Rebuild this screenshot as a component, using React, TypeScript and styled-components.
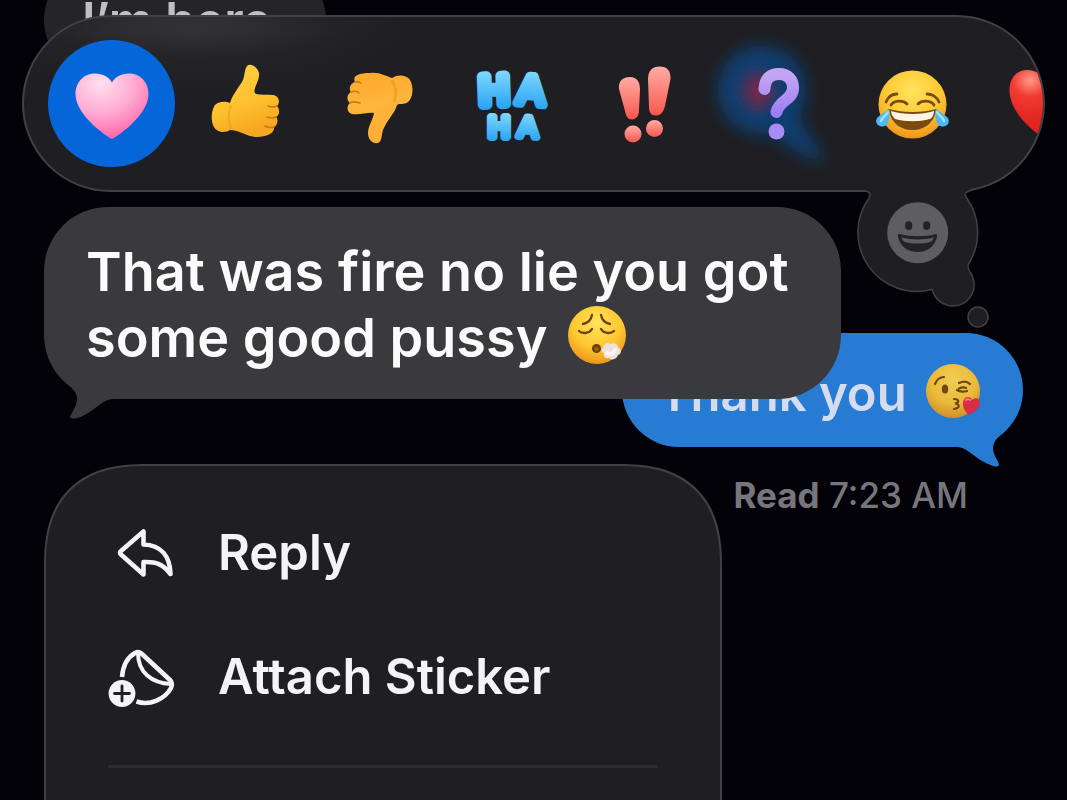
import React from "react";
import styled, { createGlobalStyle } from "styled-components";

const GlobalStyle = createGlobalStyle`
  * { box-sizing: border-box; }
  body {
    margin: 0;
    background: #030208;
    color: #fbfbfd;
    font-family: Inter, "Liberation Sans", sans-serif;
    font-weight: 600;
  }
  button { font: inherit; color: inherit; border: 0; padding: 0; background: none; cursor: pointer; }
  svg { display: block; overflow: visible; }
`;

const Screen = styled.main`
  display: grid;
  grid-template: minmax(0, 1fr) / minmax(0, 1fr);
  height: 100vh;
  overflow: hidden;
`;

const Conversation = styled.section`
  grid-area: 1 / 1;
  display: flex;
  flex-direction: column;
  gap: 256px;
  margin-top: -37px;
  padding: 0 44px;
`;

const Sent = styled.div`
  display: flex;
  flex-direction: column;
  align-items: flex-end;
  gap: 28px;
`;

type Tone = "faded" | "sent" | "focus";

const tones: Record<Tone, { text: string; fill: string; padding: string; size: number; radius: number }> = {
  faded: { text: "#bfbfc4", fill: "#252529", padding: "25px 54px 23px 38px", size: 49, radius: 57 },
  sent: { text: "#d5dcf0", fill: "#277bd3", padding: "28px 42px 20px 36px", size: 49, radius: 57 },
  focus: { text: "#fbfbfd", fill: "#3a393d", padding: "32px 42px 28px", size: 54, radius: 64 },
};

const Bubble = styled.div<{ $tone: Tone }>`
  position: relative;
  width: fit-content;
  max-width: 797px;
  padding: ${(p) => tones[p.$tone].padding};
  border-radius: ${(p) => tones[p.$tone].radius}px;
  font-size: ${(p) => tones[p.$tone].size}px;
  line-height: 66px;
  color: ${(p) => tones[p.$tone].text};
  background: ${(p) => tones[p.$tone].fill};
`;

const TailSvg = styled.svg<{ $side: "left" | "right" }>`
  position: absolute;
  bottom: -22px;
  ${(p) => p.$side}: 16px;
`;

const InlineEmoji = styled.span<{ $size: number }>`
  display: inline-block;
  vertical-align: middle;
  margin: -14px 0 0 6px;
  width: ${(p) => p.$size}px;
  height: ${(p) => p.$size}px;
`;

const Receipt = styled.p`
  margin: 0;
  padding-right: 55px;
  font-size: 35px;
  font-weight: 500;
  line-height: 40px;
  color: #77767d;
  b { font-weight: 700; }
`;

const Overlay = styled.section`
  grid-area: 1 / 1;
  display: flex;
  flex-direction: column;
  min-width: 0;
  padding-top: 15px;
  z-index: 1;
`;

const ReactionWrap = styled.div`
  position: relative;
  margin: 0 22px 15px;
`;

const ReactionBar = styled.div`
  display: flex;
  align-items: center;
  gap: 6px;
  height: 177px;
  padding-left: 24px;
  border: 2px solid #414145;
  border-radius: 89px;
  background:
    radial-gradient(ellipse 150px 28px at 170px 12px, rgba(90, 90, 98, 0.22), transparent),
    radial-gradient(ellipse 240px 80px at 160px 0, rgba(70, 70, 76, 0.25), transparent),
    #1f1f23;
  overflow: hidden;
`;

const Reaction = styled.button<{ $selected?: boolean }>`
  display: grid;
  place-items: center;
  flex: 0 0 127px;
  height: 127px;
  border-radius: 50%;
  background: ${(p) => (p.$selected ? "#0566d9" : "transparent")};
`;

const ThoughtButton = styled.button`
  position: absolute;
  top: 170px;
  right: 45px;
  width: 150px;
  height: 150px;
  z-index: 1;
`;

const FocusArea = styled.div`
  padding: 0 44px;
  margin-bottom: 65px;
`;

const Menu = styled.nav`
  flex: 1 0 auto;
  width: min(678px, calc(100% - 88px));
  margin-left: 44px;
  padding: 25px 62px 0;
  border: 2px solid #414145;
  border-bottom: 0;
  border-radius: 90px 90px 0 0;
  background: #1f1e22;

  @supports (corner-shape: superellipse(1.3)) {
    border-radius: 102px 102px 0 0;
    corner-shape: superellipse(1.3);
  }
`;

const MenuItem = styled.button`
  display: flex;
  align-items: center;
  gap: 36px;
  width: 100%;
  height: 124px;
  font-size: 49px;
  line-height: 60px;
  color: #f4f4f7;
  text-align: left;
`;

const Divider = styled.hr`
  margin: 26px 0 0;
  border: 0;
  height: 3px;
  border-radius: 2px;
  background: #2d2c31;
`;

const HEART =
  "M44 79C41 78 7.500 56 7.500 34C7.500 22 16 13.500 27 13.500C35 13.500 41 17 44 22.500C47 17 53 13.500 61 13.500C72 13.500 80.500 22 80.500 34C80.500 56 47 78 44 79Z";

const Icon = ({ children }: { children: React.ReactNode }) => (
  <svg width="88" height="88" viewBox="0 0 88 88" aria-hidden="true">{children}</svg>
);

const Heart = ({ id, colors }: { id: string; colors: string[] }) => (
  <Icon>
    <defs>
      <radialGradient id={id} cx="0.35" cy="0.15" r="0.9">
        <stop offset="0" stopColor={colors[0]} />
        <stop offset="0.5" stopColor={colors[1]} />
        <stop offset="1" stopColor={colors[2]} />
      </radialGradient>
    </defs>
    <path d={HEART} fill={`url(#${id})`} />
  </Icon>
);

const RedHeart = () => (
  <Icon>
    <defs>
      <radialGradient id="red" cx="0.28" cy="0.15" r="0.6">
        <stop offset="0" stopColor="#ff9a88" />
        <stop offset="0.4" stopColor="#f13a32" />
        <stop offset="1" stopColor="#e02420" />
      </radialGradient>
    </defs>
    <path d="M47 79C42 77 10.500 56 10.500 30C10.500 18 18 10 28 10C36 10 43 14 47 21C51 14 58 10 66 10C76 10 84 18 84 30C84 56 52 77 47 79Z" fill="url(#red)" />
  </Icon>
);

const ThumbUp = () => (
  <Icon>
    <defs>
      <linearGradient id="up" x1="0" y1="0" x2="0.3" y2="1">
        <stop offset="0" stopColor="#ffd344" />
        <stop offset="0.65" stopColor="#fdc02c" />
        <stop offset="1" stopColor="#f6a722" />
      </linearGradient>
    </defs>
    <path
      fill="url(#up)"
      d="M29 43C31 36 37 28 41 22C44 17 43 10 46 6C49 3 56 6 58 13C59 20 53 27 53.500 32C54 36 64 34 72 35C79 36 79 44 76 46C79 49 79 55 75 57C78 60 76 66 73 67C74 73 66 77 56 77C46 77 38 70 29 70C25 73 16 73 13 67C9 60 11 49 14 45C18 41 25 41 29 43Z"
    />
    <path d="M30 45C27 53 27 62 30 69" fill="none" stroke="#e69a19" strokeWidth="2" opacity="0.55" />
    <path d="M76 46C72 48 70 47 67 46M75 57C71 59 69 58 66 57M73 67C69 68 67 68 64 66" fill="none" stroke="#c97a10" strokeWidth="1.600" strokeLinecap="round" />
  </Icon>
);

const ThumbDown = () => (
  <Icon>
    <defs>
      <linearGradient id="down" x1="0" y1="0" x2="0.2" y2="1">
        <stop offset="0" stopColor="#ffa929" />
        <stop offset="0.5" stopColor="#ffb43c" />
        <stop offset="1" stopColor="#ffae35" />
      </linearGradient>
    </defs>
    <path
      fill="url(#down)"
      d="M58 18C64 14 73 15 76 20C80 27 79 38 74 42C70 45 65 43 63 45C61 53 53 60 49 70C47 77 48 81 44 83C39 84 34 80 34 73C34 66 39 60 40 53C34 52 27 55 18 54C13 53 12 46 16 43C12 40 13 34 17 32C14 28 17 23 21 22C18 15 26 13 36 13C46 12 51 16 58 18Z"
    />
    <path d="M58 20C62 27 63 35 60 42" fill="none" stroke="#ed8f19" strokeWidth="2.500" opacity="0.6" />
    <path d="M21 22C23 21 25 22 27 23M17 32C20 31 23 31 25 33M16 43C19 41 23 42 26 43" fill="none" stroke="#cf7912" strokeWidth="1.600" strokeLinecap="round" />
  </Icon>
);

const HaHa = () => (
  <Icon>
    <defs>
      <linearGradient id="ha" x1="0" y1="0" x2="0" y2="1">
        <stop offset="0" stopColor="#85dcff" />
        <stop offset="1" stopColor="#229ff2" />
      </linearGradient>
    </defs>
    <g fontFamily="Liberation Sans, sans-serif" fontWeight="400" fill="url(#ha)" stroke="url(#ha)" strokeLinejoin="round" strokeLinecap="round" textAnchor="middle">
      <text x="27" y="44" fontSize="40" strokeWidth="11" transform="rotate(-2 26 30)">H</text>
      <text x="64" y="44" fontSize="40" strokeWidth="9" transform="rotate(4 63 30)">A</text>
      <text x="32" y="77" fontSize="29" strokeWidth="8">H</text>
      <text x="61" y="77" fontSize="29" strokeWidth="7" transform="rotate(3 61 66)">A</text>
    </g>
  </Icon>
);

const Bangs = () => (
  <Icon>
    <defs>
      <linearGradient id="bang" x1="0" y1="0" x2="0" y2="1">
        <stop offset="0" stopColor="#ffaca3" />
        <stop offset="1" stopColor="#f9574d" />
      </linearGradient>
    </defs>
    <g fill="url(#bang)">
      <path d="M19 29C18 21 23 17 30 17C37 17 40 22 40 29L39 50C39 56 36 59.500 32 59.500C28 59.500 26 56 25 51Z" />
      <path d="M48 19C48 11 52 6.500 60 6.500C67 6.500 71 11 70.500 19L65 46C63 53 60 55.500 56 55.500C51 55.500 49 52 49 47Z" />
      <circle cx="33" cy="74" r="8.500" />
      <circle cx="54.500" cy="68.500" r="8.500" />
    </g>
  </Icon>
);

const Question = () => (
  <Icon>
    <defs>
      <filter id="glow" x="-60%" y="-60%" width="220%" height="220%">
        <feGaussianBlur stdDeviation="8" />
      </filter>
      <linearGradient id="q" x1="0" y1="0" x2="0" y2="1">
        <stop offset="0" stopColor="#c7a5f6" />
        <stop offset="1" stopColor="#9c80f3" />
      </linearGradient>
    </defs>
    <path d="M30 -14A44 44 0 1 0 38 73C52 84 70 98 88 102C92 96 82 82 74 72C70 64 66 58 66 54A44 44 0 0 0 30 -14Z" fill="#0b4279" filter="url(#glow)" opacity="0.9" />
    <ellipse cx="25" cy="31" rx="14" ry="18" fill="#7a2846" filter="url(#glow)" />
    <path d="M31.500 29C32 18 38 14 46 14C55 14 60 20 60 28C60 40 46 40 43.500 52" fill="none" stroke="url(#q)" strokeWidth="12" strokeLinecap="round" />
    <circle cx="43.500" cy="71.500" r="8" fill="#a98bf6" />
  </Icon>
);

const FaceGradient = ({ id, dim }: { id: string; dim?: boolean }) => (
  <defs>
    <radialGradient id={id} cx="0.5" cy="0.3" r="0.72">
      <stop offset="0" stopColor={dim ? "#f2cc54" : "#ffe45c"} />
      <stop offset="0.6" stopColor={dim ? "#eaba3a" : "#fdc630"} />
      <stop offset="1" stopColor={dim ? "#cf8c28" : "#ed9019"} />
    </radialGradient>
  </defs>
);

const Joy = () => (
  <Icon>
    <FaceGradient id="joy" />
    <circle cx="46.500" cy="44.500" r="34" fill="url(#joy)" />
    <g fill="none" stroke="#7a4a10" strokeWidth="2.800" strokeLinecap="round">
      <path d="M20 42C22 37 26 34 31 34M61 34C66 34 71 37 73 42" />
      <path d="M25 45C28 40 37 40 41 44M52 44C56 40 65 40 68 45" />
    </g>
    <path d="M23 49C36 53 57 53 70 49C69 62 59 70 46.500 70C34 70 24 62 23 49Z" fill="#7c4a0c" />
    <path d="M25 51C37 55 56 55 68 51C68 55 66 58 64 59C53 62 40 62 29 59C27 57 25 54 25 51Z" fill="#fff5e6" />
    <path d="M23 48C24 56 24 66 17 66.500C11 67 8 61 12 57C15 54 20 52 23 48Z" fill="#4cb9ee" />
    <path d="M70 48C69 56 69 66 76 66.500C82 67 85 61 81 57C78 54 73 52 70 48Z" fill="#4cb9ee" />
    <path d="M22 52C20 56 16 57 15 61M71 52C73 56 77 57 78 61" stroke="#9fe2fb" strokeWidth="2.500" fill="none" strokeLinecap="round" />
  </Icon>
);

const Exhale = () => (
  <InlineEmoji $size={60} role="img" aria-label="exhaling face">
    <svg width="60" height="60" viewBox="0 0 60 60">
      <FaceGradient id="exhale" />
      <circle cx="30" cy="30" r="29" fill="url(#exhale)" />
      <g fill="none" stroke="#70430e" strokeWidth="2.400" strokeLinecap="round">
        <path d="M16 19C21 18 24 15 25 10M34 10C35 15 38 18 43 19" />
        <path d="M12 26C15 29 22 29 25 24M34 24C37 29 44 29 47 26" />
      </g>
      <circle cx="29.500" cy="43.500" r="4.600" fill="#70430e" />
      <circle cx="29.500" cy="44" r="2" fill="#9b641b" />
      <path d="M36 43C37 38 41 37 44 39C47 37 51 39 51 42C55 44 55 49 51 50C50 54 45 56 42 53C38 54 36 51 37 48C34 47 34 44 36 43Z" fill="#eee0dc" />
      <path d="M40 48C43 50 47 49 48 45" fill="none" stroke="#fbf5f2" strokeWidth="4" strokeLinecap="round" />
    </svg>
  </InlineEmoji>
);

const Kiss = () => (
  <InlineEmoji $size={56} role="img" aria-label="face blowing a kiss">
    <svg width="56" height="56" viewBox="0 0 56 56">
      <FaceGradient id="kiss" dim />
      <circle cx="28" cy="28" r="27" fill="url(#kiss)" />
      <g fill="none" stroke="#6d4714" strokeWidth="2.200" strokeLinecap="round">
        <path d="M10 21C12 16 15 14 19 14M34 20C38 18 42 18 45 21M32 27C35 29 40 29 42 28M34 25.500C37 24 39 24 41 25" />
        <path d="M29 36C34 36 35 39 30 40.500C35 41 35 45 29 46" />
      </g>
      <ellipse cx="20" cy="26" rx="3.200" ry="4.500" fill="#6d4714" />
      <path d="M44 52C38 47 36 40 40 35C43 33 46 34 47 37C50 34 55 35 55 40C55 45 49 49 44 52Z" fill="#d62f43" />
      <path d="M41 37C42 36 44 36 45 37" stroke="#f2848a" strokeWidth="1.800" strokeLinecap="round" fill="none" />
    </svg>
  </InlineEmoji>
);

const ThoughtIcon = () => (
  <svg width="150" height="150" viewBox="850 185 150 150" aria-hidden="true">
    <path d="M866 186V191C870 192 871 194 869 198A59 59 0 0 0 932 289.500C935 300 944 306 953 306C967 306 979 292 972 275C968 270 967 267 969 263A59 59 0 0 0 966 197C964 193 966 192 970 190V186Z" fill="#1f1f23" />
    <path
      d="M864 191C870 191 871 194 869 198A59 59 0 0 0 932 289.500C935 300 944 306 953 306C967 306 979 292 972 275C968 270 967 267 969 263A59 59 0 0 0 966 197C964 193 966 192 972 190"
      fill="none"
      stroke="#414145"
      strokeWidth="1.500"
    />
    <circle cx="978" cy="317" r="10" fill="#1f1f23" stroke="#414145" strokeWidth="1.500" />
    <circle cx="917.700" cy="232.700" r="30.500" fill="#5e5e61" />
    <ellipse cx="908.700" cy="225.700" rx="3.600" ry="4.400" fill="#232327" />
    <ellipse cx="926.700" cy="225.700" rx="3.600" ry="4.400" fill="#232327" />
    <path d="M899 234C911 237 925 237 936 234C938 234 937 237 936 240C933 248 926 252 917.700 252C909 252 902 248 899 240C898 236 897 234 899 234Z" fill="#232327" />
    <path d="M901.500 237.500C912 240 924 240 934 237.500C933 240 932 241 930 242C922 244 913 244 905 242C903 241 902 240 901.500 237.500Z" fill="#5e5e61" />
  </svg>
);

const ReplyIcon = () => (
  <svg width="74" height="74" viewBox="0 0 74 74" fill="none" stroke="currentColor" strokeWidth="4.600" strokeLinejoin="round" strokeLinecap="round" aria-hidden="true">
    <path d="M35.500 15.500V28.500C53 29 62 40 62.500 58C55 48 48 45.500 35.500 46V58.500L13 38.500Q11 36.500 13 35Z" />
  </svg>
);

const StickerIcon = () => (
  <svg width="74" height="74" viewBox="0 0 74 74" fill="none" stroke="currentColor" strokeWidth="4.600" strokeLinejoin="round" aria-hidden="true">
    <path d="M14 37C15 25 20 17 27 13Q31 11 34 14L62 40Q65 43 63 48C57 59 42 66 28.500 61.500" />
    <path d="M30 13C30 32 43 43 63 44" strokeWidth="4" />
    <circle cx="14" cy="53.500" r="13.400" fill="currentColor" stroke="none" />
    <path d="M14 46V61M6.500 53.500H21.500" stroke="#1f1e22" strokeWidth="2.800" strokeLinecap="round" />
  </svg>
);

const reactions = [
  { name: "Love", icon: <Heart id="pink" colors={["#ffe0f0", "#ffacd2", "#ff5fa8"]} />, selected: true },
  { name: "Like", icon: <ThumbUp /> },
  { name: "Dislike", icon: <ThumbDown /> },
  { name: "Laugh", icon: <HaHa /> },
  { name: "Emphasize", icon: <Bangs /> },
  { name: "Question", icon: <Question /> },
  { name: "Tears of joy", icon: <Joy /> },
  { name: "Red heart", icon: <RedHeart /> },
];

const menuItems = [
  { label: "Reply", icon: <ReplyIcon /> },
  { label: "Attach Sticker", icon: <StickerIcon /> },
];

export default function App() {
  return (
    <>
      <GlobalStyle />
      <Screen>
        <Conversation>
          <Bubble $tone="faded">I’m here</Bubble>
          <Sent>
            <Bubble $tone="sent">
              Thank you <Kiss />
              <TailSvg $side="right" width="60" height="60" viewBox="947 409 60 60" aria-hidden="true">
                <path d="M1006 430C1000 436 993 440 993 448C993 456 999 461 999 465C997 469 988 464 982 461C972 455 966 447 956 447L970 420Z" fill="#277bd3" />
              </TailSvg>
            </Bubble>
            <Receipt><b>Read</b> 7:23 AM</Receipt>
          </Sent>
        </Conversation>
        <Overlay>
          <ReactionWrap>
            <ReactionBar>
              {reactions.map((r) => (
                <Reaction key={r.name} aria-label={r.name} $selected={r.selected}>{r.icon}</Reaction>
              ))}
            </ReactionBar>
            <ThoughtButton aria-label="More emoji"><ThoughtIcon /></ThoughtButton>
          </ReactionWrap>
          <FocusArea>
            <Bubble $tone="focus">
              That was fire no lie you got some good pussy <Exhale />
              <TailSvg $side="left" width="60" height="60" viewBox="60 361 60 60" aria-hidden="true">
                <path d="M62 379C70 386 78 392 77 400C76 408 71 413 70 417C72 421 82 417 88 413C98 407 104 399 114 399L108 375Z" fill="#3a393d" />
              </TailSvg>
            </Bubble>
          </FocusArea>
          <Menu>
            {menuItems.map((m) => (
              <MenuItem key={m.label}>{m.icon}{m.label}</MenuItem>
            ))}
            <Divider />
          </Menu>
        </Overlay>
      </Screen>
    </>
  );
}
